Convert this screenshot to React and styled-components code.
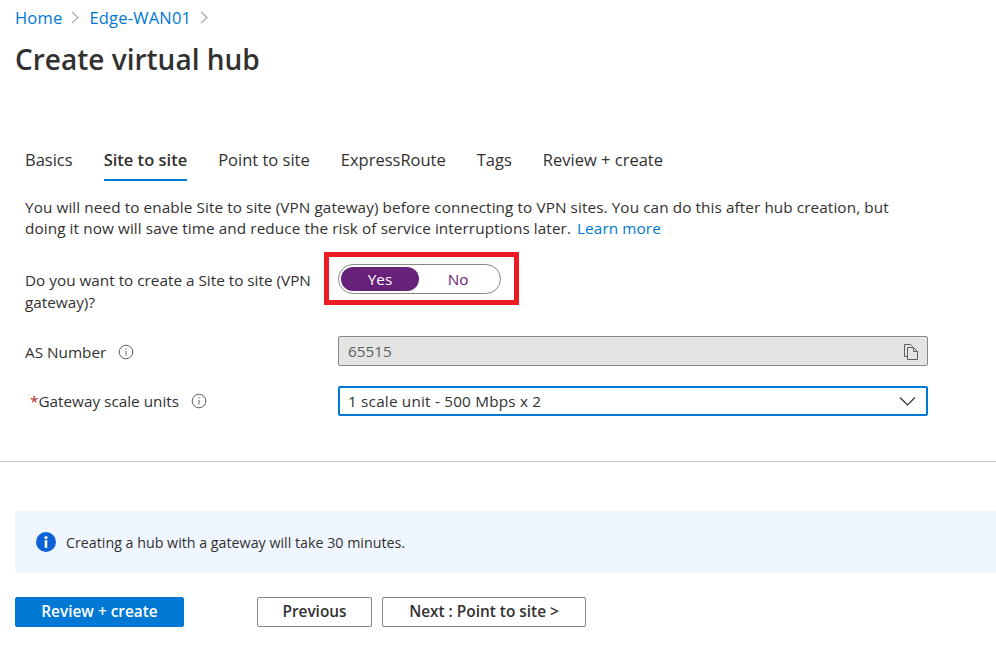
import styled, { createGlobalStyle } from 'styled-components'

const GlobalStyle = createGlobalStyle`
    html, body {
        margin: 0;
        padding: 0;
        background: #fff;
    }
    body {
        font-family: 'Open Sans', 'Noto Sans', sans-serif;
        color: #323130;
    }
`

const Page = styled.div`
    width: 996px;
    height: 652px;
    overflow: hidden;
    display: flex;
    flex-direction: column;
`

const Header = styled.header`
    padding: 8px 15px 0;
    height: 130px;
    box-sizing: border-box;
`

const Breadcrumb = styled.nav`
    display: flex;
    align-items: center;
    height: 19px;
    font-size: 16.5px;
    letter-spacing: 0.2px;
`

const Crumb = styled.a`
    color: #0078d4;
    text-decoration: none;
`

const CrumbArrow = styled.svg`
    width: 8px;
    height: 13px;
    margin: 0 10px 0 9px;
    fill: none;
    stroke: #a8a8a8;
    stroke-width: 1.2;
`

const Title = styled.h1`
    margin: 7px 0 0;
    font-size: 28px;
    line-height: 50px;
    font-weight: 600;
    color: #323130;
`

const TabBar = styled.div`
    display: flex;
    gap: 31px;
    padding: 19px 25px 0;
    height: 50px;
    box-sizing: border-box;
`

const Tab = styled.div`
    height: 32px;
    line-height: 21px;
    font-size: 16.5px;
    font-weight: ${props => props.$active ? 600 : 400};
    color: #323130;
    border-bottom: 2px solid ${props => props.$active ? '#0078d4' : 'transparent'};
    box-sizing: border-box;
`

const Intro = styled.p`
    margin: 17px 0 0;
    padding: 0 25px;
    width: 920px;
    box-sizing: border-box;
    font-size: 15.3px;
    line-height: 21px;
    letter-spacing: 0.09px;
    color: #323130;
`

const IntroLink = styled.a`
    margin-left: 6px;
    color: #0078d4;
    text-decoration: none;
`

const FormRow = styled.div`
    display: flex;
    align-items: ${props => props.$top ? 'flex-start' : 'center'};
    padding: 0 0 0 25px;
    margin-top: ${props => props.$gap}px;
`

const Label = styled.label`
    width: 313px;
    flex: none;
    padding-top: ${props => props.$pad || 0}px;
    font-size: 15.3px;
    line-height: 22px;
    color: #323130;
    display: block;
`

const LabelInner = styled.span`
    display: flex;
    align-items: center;
    padding-left: ${props => props.$indent || 0}px;
`

const Required = styled.span`
    color: #a4262c;
`

const InfoIcon = styled.svg`
    width: 16px;
    height: 16px;
    margin-left: 12px;
    fill: none;
    stroke: #605e5c;
`

const ToggleWrap = styled.div`
    position: relative;
`

const Toggle = styled.div`
    width: 163px;
    height: 30px;
    box-sizing: border-box;
    border: 1px solid #8a8886;
    border-radius: 15px;
    padding: 2px;
    display: flex;
`

const ToggleOption = styled.div`
    width: 78px;
    height: 24px;
    border-radius: 12px;
    text-align: center;
    line-height: 24px;
    font-size: 15.3px;
    background: ${props => props.$on ? '#68217a' : 'transparent'};
    color: ${props => props.$on ? '#fff' : '#68217a'};
`

const Highlight = styled.div`
    position: absolute;
    left: -14px;
    top: -12px;
    width: 195px;
    height: 53px;
    box-sizing: border-box;
    border: 5px solid #ed1c24;
    pointer-events: none;
`

const ReadOnlyField = styled.div`
    width: 590px;
    height: 30px;
    box-sizing: border-box;
    background: #e4e4e4;
    border: 1px solid #8a8886;
    border-radius: 2px;
    display: flex;
    align-items: center;
    justify-content: space-between;
    padding: 0 9px 0 9px;
    font-size: 15.3px;
    color: #605e5c;
`

const CopyIcon = styled.svg`
    width: 14px;
    height: 16px;
    fill: none;
    stroke: #605e5c;
    margin-top: 1px;
`

const SelectField = styled.div`
    width: 590px;
    height: 30px;
    box-sizing: border-box;
    background: #fff;
    border: 2px solid #0078d4;
    border-radius: 2px;
    display: flex;
    align-items: center;
    justify-content: space-between;
    padding: 0 10px 0 8px;
    font-size: 15.3px;
    letter-spacing: 0.2px;
    color: #323130;
`

const Chevron = styled.svg`
    width: 17px;
    height: 10px;
    fill: none;
    stroke: #323130;
    stroke-width: 1.2;
`

const Divider = styled.hr`
    margin: 45px 0 0;
    border: 0;
    border-top: 1px solid #c8c6c4;
    width: 100%;
`

const Banner = styled.div`
    margin: 49px 0 0 15px;
    height: 62px;
    background: #eff6ff;
    border-radius: 2px 0 0 2px;
    display: flex;
    align-items: center;
    padding-left: 21px;
    gap: 10px;
    font-size: 14.25px;
    color: #323130;
`

const BannerIcon = styled.svg`
    width: 20px;
    height: 20px;
    flex: none;
`

const Footer = styled.div`
    display: flex;
    margin: 24px 0 0 15px;
`

const Button = styled.button`
    height: 30px;
    box-sizing: border-box;
    width: ${props => props.$width}px;
    margin-left: ${props => props.$offset || 0}px;
    padding: 0 0 2px;
    border-radius: 2px;
    font-family: inherit;
    font-size: 15.4px;
    font-weight: 600;
    border: 1px solid ${props => props.$primary ? '#0078d4' : '#8a8886'};
    background: ${props => props.$primary ? '#0078d4' : '#fff'};
    color: ${props => props.$primary ? '#fff' : '#323130'};
`

function Arrow() {
    return (
        <CrumbArrow viewBox="0 0 8 13">
            <path d="M1 1 L7 6.5 L1 12" />
        </CrumbArrow>
    )
}

function Info() {
    return (
        <InfoIcon viewBox="0 0 16 16">
            <circle cx="8" cy="8" r="6.8" />
            <path d="M8 7 V11.5 M8 4.4 V5.6" />
        </InfoIcon>
    )
}

export default function App() {
    return (
        <Page>
            <GlobalStyle />
            <Header>
                <Breadcrumb>
                    <Crumb>Home</Crumb>
                    <Arrow />
                    <Crumb>Edge-WAN01</Crumb>
                    <Arrow />
                </Breadcrumb>
                <Title>Create virtual hub</Title>
            </Header>
            <TabBar>
                <Tab>Basics</Tab>
                <Tab $active>Site to site</Tab>
                <Tab>Point to site</Tab>
                <Tab>ExpressRoute</Tab>
                <Tab>Tags</Tab>
                <Tab>Review + create</Tab>
            </TabBar>
            <Intro>
                You will need to enable Site to site (VPN gateway) before connecting to VPN sites. You can do this after hub creation, but doing it now will save time and reduce the risk of service interruptions later.
                <IntroLink>Learn more</IntroLink>
            </Intro>
            <FormRow $top $gap={25}>
                <Label $pad={5}>Do you want to create a Site to site (VPN gateway)?</Label>
                <ToggleWrap>
                    <Toggle>
                        <ToggleOption $on>Yes</ToggleOption>
                        <ToggleOption>No</ToggleOption>
                    </Toggle>
                    <Highlight />
                </ToggleWrap>
            </FormRow>
            <FormRow $gap={23}>
                <Label $pad={2}>
                    <LabelInner>AS Number<Info /></LabelInner>
                </Label>
                <ReadOnlyField>
                    65515
                    <CopyIcon viewBox="0 0 14 16">
                        <path d="M3.5 12.5 H0.5 V0.5 H6.5 L8.5 2.5 V4" />
                        <path d="M3.5 3.5 H9.5 L13.5 7.5 V15.5 H3.5 Z" />
                        <path d="M9.5 3.5 V7.5 H13.5" />
                    </CopyIcon>
                </ReadOnlyField>
            </FormRow>
            <FormRow $gap={20}>
                <Label>
                    <LabelInner $indent={5}><Required>*</Required>Gateway scale units<Info /></LabelInner>
                </Label>
                <SelectField>
                    1 scale unit - 500 Mbps x 2
                    <Chevron viewBox="0 0 17 10">
                        <path d="M1 1.5 L8.5 9 L16 1.5" />
                    </Chevron>
                </SelectField>
            </FormRow>
            <Divider />
            <Banner>
                <BannerIcon viewBox="0 0 20 20">
                    <circle cx="10" cy="10" r="10" fill="#0b62d6" />
                    <rect x="8.7" y="8.2" width="2.6" height="7.6" fill="#fff" />
                    <circle cx="10" cy="5.6" r="1.6" fill="#fff" />
                </BannerIcon>
                Creating a hub with a gateway will take 30 minutes.
            </Banner>
            <Footer>
                <Button $primary $width={169}>Review + create</Button>
                <Button $width={115} $offset={73}>Previous</Button>
                <Button $width={204} $offset={10}>Next : Point to site &gt;</Button>
            </Footer>
        </Page>
    )
}
